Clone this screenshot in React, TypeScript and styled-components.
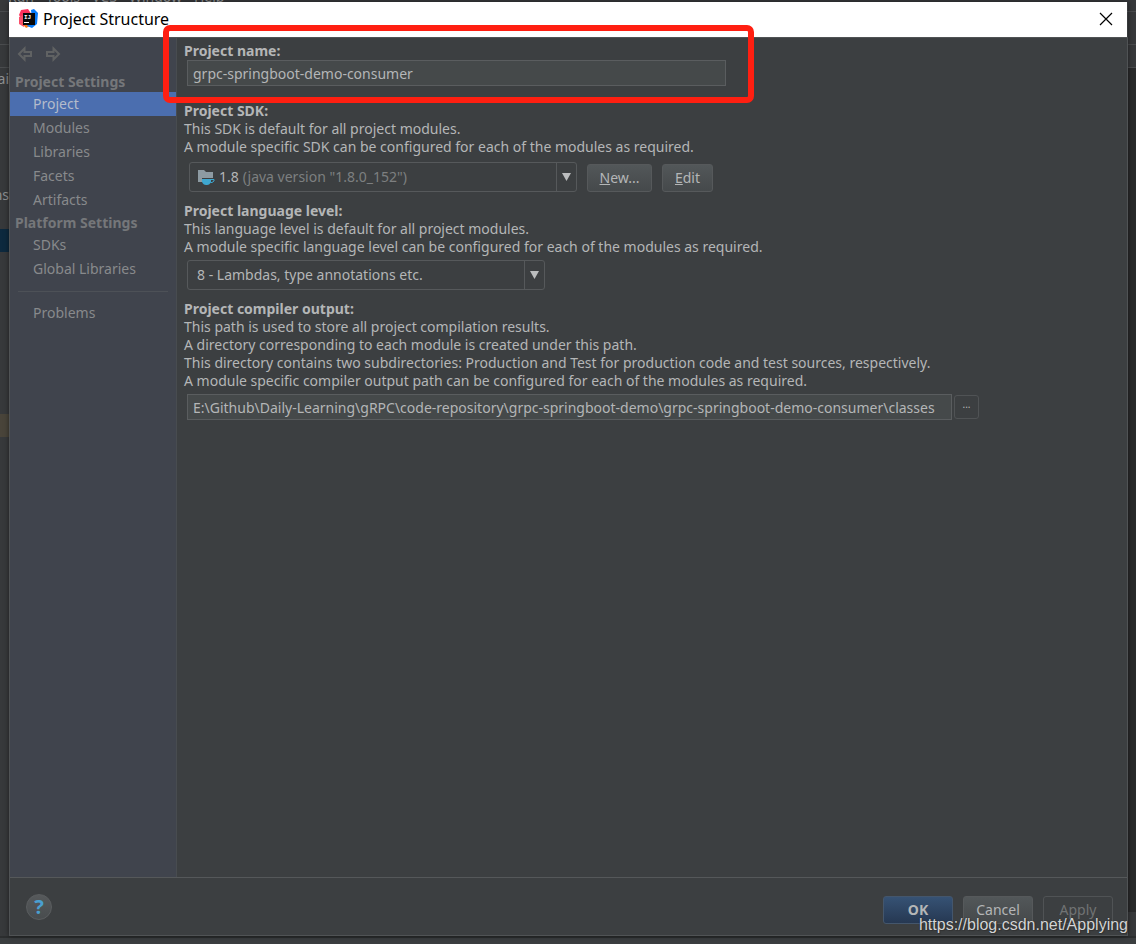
import React from "react";
import styled, { createGlobalStyle, css } from "styled-components";

const uiFont = `"Noto Sans", "Open Sans", sans-serif`;

const GlobalStyle = createGlobalStyle`
  *, *::before, *::after { box-sizing: border-box; }
  body { margin: 0; background: #3a3d3f; }
  button, input, select { font: inherit; margin: 0; }
`;

const Desktop = styled.div`
  position: relative;
  display: flex;
  min-height: 100vh;
  padding: 2px 8px 8px 9px;
  overflow: hidden;
  background: #37393b;
  color: #b4b6b7;
  font: 14px/18px ${uiFont};
`;

const Backdrop = styled.div`
  position: absolute;
  inset: 0;
  overflow: hidden;
  background: #37393b;
`;

const BackMenu = styled.div`
  position: absolute;
  top: -12px;
  left: 8px;
  display: flex;
  gap: 12px;
  color: #999b9c;
`;

const BackRule = styled.div<{ $y: number }>`
  position: absolute;
  top: ${(p) => p.$y}px;
  left: 0;
  right: 0;
  height: 1px;
  background: #4a4c4e;
`;

const BackText = styled.span<{ $y: number }>`
  position: absolute;
  top: ${(p) => p.$y}px;
  left: 0;
  width: 9px;
  display: flex;
  justify-content: flex-end;
  color: #8d8f90;
`;

const BackBand = styled.div<{ $y: number; $color: string }>`
  position: absolute;
  top: ${(p) => p.$y}px;
  left: 0;
  width: 9px;
  height: 23px;
  background: ${(p) => p.$color};
`;

const BackEditor = styled.div`
  position: absolute;
  top: 68px;
  right: 0;
  bottom: 32px;
  width: 8px;
  background: #292a2b;
`;

const BackStatus = styled.div`
  position: absolute;
  right: 0;
  bottom: 0;
  left: 0;
  height: 8px;
  border-top: 2px solid #2c2e2f;
  background: #3b3e40;
`;

const Dialog = styled.div`
  position: relative;
  flex: 1;
  min-width: 0;
  display: flex;
  flex-direction: column;
  box-shadow: 0 0 5px rgba(0, 0, 0, 0.5);
`;

const TitleBar = styled.header`
  display: flex;
  align-items: center;
  justify-content: space-between;
  height: 35px;
  margin-right: 1px;
  padding: 0 14px 2px 10px;
  background: #fff;
  color: #000;
`;

const TitleText = styled.h1`
  display: flex;
  align-items: center;
  gap: 4px;
  margin: 0;
  font-size: 16px;
  font-weight: 400;
  line-height: 18px;
`;

const IconButton = styled.button`
  display: flex;
  padding: 0;
  border: 0;
  background: none;
  color: inherit;
`;

const Frame = styled.div`
  flex: 1;
  display: flex;
  flex-direction: column;
  border: 1px solid #505355;
  background: #3c3f41;
`;

const Columns = styled.div`
  flex: 1;
  display: flex;
`;

const Sidebar = styled.nav`
  flex: 0 0 167px;
  border-right: 1px solid #484c50;
  background: #40444d;
  color: #888a8c;
`;

const History = styled.div`
  display: flex;
  gap: 12px;
  padding: 8px 7px 10px;
  color: #606263;
`;

const GroupTitle = styled.h2`
  margin: 0;
  padding-left: 5px;
  color: #75777a;
  font-size: 14px;
  font-weight: 700;
  line-height: 20px;
`;

const NavList = styled.ul`
  margin: 0;
  padding: 0 0 1px;
  list-style: none;
`;

const NavItem = styled.a<{ $active?: boolean }>`
  display: block;
  padding-left: 23px;
  line-height: 24px;
  color: ${(p) => (p.$active ? "#b4bccb" : "inherit")};
  background: ${(p) => (p.$active ? "#4b6eaf" : "none")};
  text-decoration: none;
`;

const Divider = styled.hr`
  height: 1px;
  margin: 9px 8px;
  border: 0;
  background: #4d5157;
`;

const Content = styled.main`
  flex: 1;
  min-width: 0;
  display: flex;
  flex-direction: column;
  gap: 10px;
  padding: 4px 8px 16px 7px;
`;

const Section = styled.section``;

const SectionTitle = styled.label`
  display: block;
  font-weight: 700;
`;

const Hint = styled.p`
  margin: 0;
`;

const NameSection = styled(Section)`
  position: relative;
  max-width: 542px;
  padding-bottom: 6px;
`;

const Highlight = styled.div`
  position: absolute;
  inset: -17px -28px -11px -21px;
  border: 6px solid #ff1f11;
  border-radius: 7px;
  pointer-events: none;
`;

const TextInput = styled.input`
  flex: 1;
  min-width: 0;
  width: 100%;
  height: 26px;
  padding: 0 5px;
  border: 1px solid #5a5d5f;
  background: #45494a;
  color: #b4b6b7;
`;

const ControlRow = styled.div<{ $top?: number; $left?: number; $width?: number; $gap?: number }>`
  display: flex;
  align-items: flex-end;
  gap: ${(p) => p.$gap ?? 0}px;
  max-width: ${(p) => (p.$width ? `${p.$width}px` : "none")};
  padding-top: ${(p) => p.$top ?? 0}px;
  padding-left: ${(p) => p.$left ?? 3}px;
`;

const Combo = styled.div<{ $width: number }>`
  position: relative;
  flex: 0 1 ${(p) => p.$width}px;
  display: flex;
  height: 30px;
  border: 1px solid #56595b;
  border-radius: 3px;
`;

const ComboSelect = styled.select<{ $hideText?: boolean }>`
  appearance: none;
  width: 100%;
  padding: 0 30px 0 9px;
  border: 0;
  background: none;
  color: ${(p) => (p.$hideText ? "transparent" : "#b4b6b7")};

  option { background: #3c3f41; color: #b4b6b7; }
`;

const ComboArrow = styled.span`
  position: absolute;
  inset: 0 0 0 auto;
  display: flex;
  align-items: center;
  justify-content: center;
  width: 20px;
  border-left: 1px solid #56595b;
  pointer-events: none;
`;

const ComboFace = styled.span`
  position: absolute;
  inset: 0 20px 0 7px;
  display: flex;
  align-items: center;
  gap: 4px;
  overflow: hidden;
  white-space: nowrap;
  pointer-events: none;
`;

const Muted = styled.span`
  color: #7d7f80;
`;

type Tone = "plain" | "primary" | "disabled" | "flat";

const tones = {
  plain: css`
    border-color: #56595b;
    background: linear-gradient(#525759, #45494b);
  `,
  primary: css`
    border-color: #44566c;
    background: linear-gradient(#365274, #263852);
    font-weight: 700;
  `,
  disabled: css`
    border-color: #505355;
    background: none;
    color: #717374;
  `,
  flat: css`
    border-color: #505355;
    background: none;
    font-size: 10px;
  `,
};

const Button = styled.button<{ $width: number; $tone?: Tone }>`
  flex: none;
  width: ${(p) => p.$width}px;
  height: 28px;
  padding: 0;
  border: 1px solid;
  border-radius: 3px;
  color: #b4b6b7;
  ${(p) => tones[p.$tone ?? "plain"]}
`;

const BrowseButton = styled(Button)`
  align-self: center;
  height: 24px;
  padding-bottom: 6px;
  line-height: 16px;
`;

const Footer = styled.footer`
  display: flex;
  align-items: center;
  justify-content: space-between;
  height: 58px;
  padding: 0 14px 0 16px;
  border-top: 1px solid #55585a;
`;

const Actions = styled.div`
  display: flex;
  gap: 10px;
  padding-top: 6px;
`;

const HelpButton = styled.button`
  width: 26px;
  height: 26px;
  padding: 0;
  border: 1px solid #5a5d5f;
  border-radius: 50%;
  background: linear-gradient(#56595b, #484c4e);
  color: #4a9fd0;
  font-size: 20px;
  font-weight: 700;
  line-height: 24px;
`;

const Watermark = styled.span`
  position: absolute;
  right: 8px;
  bottom: 9px;
  color: #d4d5d6;
  font: 16px/20px "Liberation Sans", sans-serif;
  text-shadow: 0 0 1px #222, 1px 1px 1px #333;
  pointer-events: none;
`;

const AppLogo = () => (
  <svg width="20" height="20" viewBox="0 0 20 20" aria-hidden="true">
    <path d="M2 1 9 0 13 6 6 15 0 14 2 9 0 6z" fill="#fe315d" />
    <path d="M0 8 4 6 7 13 5 18 0 15z" fill="#f9506a" />
    <path d="M3 14 9 14 11 17 7 19z" fill="#f97a12" />
    <path d="M12 1 15 0 19 4 18 15 13 19 8 17 13 10z" fill="#087cfa" />
    <rect x="4" y="4" width="12" height="12" fill="#080808" />
    <text x="5" y="10" fill="#fff" fontSize="6" fontWeight="700" fontFamily="Liberation Mono, monospace">IJ</text>
    <rect x="5" y="13" width="5" height="1" fill="#fff" />
  </svg>
);

const CloseIcon = () => (
  <svg width="14" height="14" viewBox="0 0 14 14" aria-hidden="true">
    <path d="M1 1 13 13M13 1 1 13" stroke="#000" strokeWidth="1.2" />
  </svg>
);

const HistoryArrow = ({ forward }: { forward?: boolean }) => (
  <svg width="16" height="16" viewBox="0 0 16 16" aria-hidden="true">
    <path
      d={forward ? "M14 8 8.500 2.500V6H2v4h6.500v3.500z" : "M2 8 7.500 2.500V6H14v4H7.500v3.500z"}
      fill="none"
      stroke="currentColor"
      strokeWidth="2"
    />
  </svg>
);

const SdkIcon = () => (
  <svg width="18" height="18" viewBox="0 0 18 18" aria-hidden="true">
    <path d="M1 2h6l2 2h7v6H5v4H1z" fill="#8d9ba3" />
    <path d="M5 11h9v3c-1 2-2 3-4 3h-1c-2 0-3-1-4-3z" fill="#3ea7d0" />
    <path d="M14 11.500h3v1.500l-2 1.500h-1.500" fill="none" stroke="#3ea7d0" />
  </svg>
);

const Triangle = () => (
  <svg width="9" height="8" viewBox="0 0 9 8" aria-hidden="true">
    <path d="M0 0h9L4.500 8z" fill="#bbbdbe" />
  </svg>
);

const projectItems = ["Project", "Modules", "Libraries", "Facets", "Artifacts"];
const platformItems = ["SDKs", "Global Libraries"];

const NavGroup = ({ items, active }: { items: string[]; active?: string }) => (
  <NavList>
    {items.map((item) => (
      <li key={item}>
        <NavItem href="#" $active={item === active} aria-current={item === active ? "page" : undefined}>
          {item}
        </NavItem>
      </li>
    ))}
  </NavList>
);

export default function App() {
  return (
    <Desktop>
      <GlobalStyle />
      <Backdrop aria-hidden="true">
        <BackMenu>
          <span>Run</span>
          <span>Tools</span>
          <span>VCS</span>
          <span>Window</span>
          <span>Help</span>
        </BackMenu>
        <BackRule $y={11} />
        <BackRule $y={44} />
        <BackRule $y={67} />
        <BackEditor />
        <BackText $y={70}>ai</BackText>
        <BackText $y={186}>ns</BackText>
        <BackBand $y={229} $color="#0d293e" />
        <BackBand $y={414} $color="#49443a" />
        <BackStatus />
      </Backdrop>
      <Dialog role="dialog" aria-labelledby="dialog-title">
        <TitleBar>
          <TitleText id="dialog-title">
            <AppLogo />
            Project Structure
          </TitleText>
          <IconButton aria-label="Close">
            <CloseIcon />
          </IconButton>
        </TitleBar>
        <Frame>
          <Columns>
            <Sidebar>
              <History>
                <IconButton aria-label="Back">
                  <HistoryArrow />
                </IconButton>
                <IconButton aria-label="Forward">
                  <HistoryArrow forward />
                </IconButton>
              </History>
              <GroupTitle>Project Settings</GroupTitle>
              <NavGroup items={projectItems} active="Project" />
              <GroupTitle>Platform Settings</GroupTitle>
              <NavGroup items={platformItems} />
              <Divider />
              <NavGroup items={["Problems"]} />
            </Sidebar>
            <Content>
              <NameSection>
                <SectionTitle htmlFor="project-name">Project name:</SectionTitle>
                <ControlRow>
                  <TextInput id="project-name" defaultValue="grpc-springboot-demo-consumer" />
                </ControlRow>
                <Highlight />
              </NameSection>
              <Section>
                <SectionTitle htmlFor="project-sdk">Project SDK:</SectionTitle>
                <Hint>This SDK is default for all project modules.</Hint>
                <Hint>A module specific SDK can be configured for each of the modules as required.</Hint>
                <ControlRow $top={6} $left={5} $gap={10}>
                  <Combo $width={388}>
                    <ComboSelect id="project-sdk" $hideText>
                      <option>1.8</option>
                    </ComboSelect>
                    <ComboFace aria-hidden="true">
                      <SdkIcon />
                      <span>1.8</span>
                      <Muted>(java version "1.8.0_152")</Muted>
                    </ComboFace>
                    <ComboArrow>
                      <Triangle />
                    </ComboArrow>
                  </Combo>
                  <Button $width={65}>
                    <u>N</u>ew...
                  </Button>
                  <Button $width={51}>
                    <u>E</u>dit
                  </Button>
                </ControlRow>
              </Section>
              <Section>
                <SectionTitle htmlFor="language-level">Project language level:</SectionTitle>
                <Hint>This language level is default for all project modules.</Hint>
                <Hint>A module specific language level can be configured for each of the modules as required.</Hint>
                <ControlRow $top={4}>
                  <Combo $width={358}>
                    <ComboSelect id="language-level">
                      <option>8 - Lambdas, type annotations etc.</option>
                    </ComboSelect>
                    <ComboArrow>
                      <Triangle />
                    </ComboArrow>
                  </Combo>
                </ControlRow>
              </Section>
              <Section>
                <SectionTitle htmlFor="compiler-output">Project compiler output:</SectionTitle>
                <Hint>This path is used to store all project compilation results.</Hint>
                <Hint>A directory corresponding to each module is created under this path.</Hint>
                <Hint>
                  This directory contains two subdirectories: Production and Test for production code and test sources,
                  respectively.
                </Hint>
                <Hint>A module specific compiler output path can be configured for each of the modules as required.</Hint>
                <ControlRow $top={4} $gap={2} $width={795}>
                  <TextInput
                    id="compiler-output"
                    defaultValue="E:\Github\Daily-Learning\gRPC\code-repository\grpc-springboot-demo\grpc-springboot-demo-consumer\classes"
                  />
                  <BrowseButton $width={25} $tone="flat" aria-label="Browse">
                    ...
                  </BrowseButton>
                </ControlRow>
              </Section>
            </Content>
          </Columns>
          <Footer>
            <HelpButton aria-label="Help">?</HelpButton>
            <Actions>
              <Button $width={70} $tone="primary">
                OK
              </Button>
              <Button $width={70}>Cancel</Button>
              <Button $width={70} $tone="disabled" disabled>
                Apply
              </Button>
            </Actions>
          </Footer>
        </Frame>
      </Dialog>
      <Watermark>https://blog.csdn.net/Applying</Watermark>
    </Desktop>
  );
}
